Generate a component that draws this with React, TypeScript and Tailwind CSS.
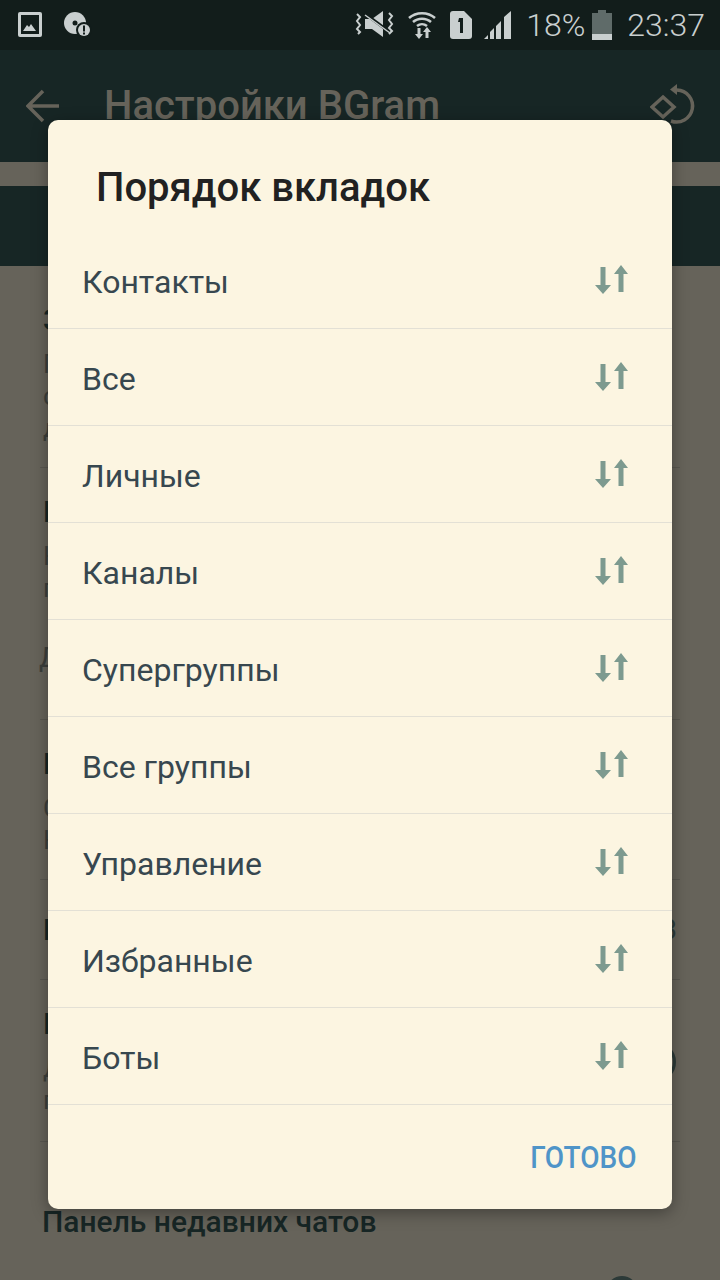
const tabs = [
  "Контакты",
  "Все",
  "Личные",
  "Каналы",
  "Супергруппы",
  "Все группы",
  "Управление",
  "Избранные",
  "Боты",
];

function SortIcon() {
  return (
    <svg width="34" height="32" viewBox="0 0 34 32" fill="#7d9a8f">
      <path d="M5.500 3h5v18h5.500l-8 9-8-9h5.500z" />
      <path d="M23.500 28V10H19l7-9 7 9h-4.500v18z" />
    </svg>
  );
}

function StatusIcons() {
  return (
    <div className="flex items-center">
      <svg width="41" height="32" viewBox="0 0 41 32" fill="none" className="mr-[11px]">
        <path d="M10 10h7l11-8v26l-11-8h-7z" fill="#c9cfcf" />
        <path d="M9 4l27 20" stroke="#121d1b" strokeWidth="3" />
        <path d="M10 6l25 18" stroke="#c9cfcf" strokeWidth="1.500" />
        <path d="M34 4l3 3-3 4 3 4-3 4 3 3-3 3M2 5l3 3-3 4 3 4-3 4 3 3-2 2" stroke="#c9cfcf" strokeWidth="2" />
      </svg>
      <svg width="30" height="30" viewBox="0 0 30 30" fill="none" className="mr-[13px]">
        <path d="M2 8c7-6.500 19-6.500 26 0M6 12c5-4.500 13-4.500 18 0M10 16c3-2.500 7-2.500 10 0" stroke="#c9cfcf" strokeWidth="2.500" />
        <path d="M10.500 18h3v6H16l-4 5-4-5h2.500zM18.500 28v-6H16l4-5 4 5h-2.500v6z" fill="#c9cfcf" />
      </svg>
      <svg width="22" height="28" viewBox="0 0 22 28" className="mr-[12px]">
        <path d="M3 0h11l8 8v17a3 3 0 0 1-3 3H3a3 3 0 0 1-3-3V3a3 3 0 0 1 3-3z" fill="#c9cfcf" />
        <path d="M9 7h4v15h-3V11H8z" fill="#121d1b" />
      </svg>
      <svg width="28" height="28" viewBox="0 0 28 28" fill="#c9cfcf" className="mr-[14px]">
        <path d="M0 28l4-4v4zM6 28v-7l4-4v11zM12 28V15l5-5v18zM20 28V6l7-6v28z" />
      </svg>
      <span className="text-[32px] leading-none font-light text-[#c9cfcf] mr-[7px]">18%</span>
      <svg width="20" height="30" viewBox="0 0 20 30" className="mr-[15px]">
        <path d="M6 0h8v3h6v27H0V3h6z" fill="#5f6b69" />
        <path d="M0 24h20v6H0z" fill="#c9cfcf" />
      </svg>
      <span className="text-[32px] leading-none font-light text-[#c9cfcf]">23:37</span>
    </div>
  );
}

function SettingsBehind() {
  return (
    <div className="flex-1 bg-[#66635a] overflow-hidden text-[#172625]">
      <div className="h-[202px] border-b border-[#595750] mx-[40px] px-[3px] pt-[36px]">
        <div className="text-[30px] font-medium leading-[36px]">З</div>
        <div className="mt-[10px] text-[26px] leading-[32px] text-[#3c3f3b]">
          <div>П</div>
          <div>с</div>
          <div>д</div>
        </div>
      </div>
      <div className="h-[252px] border-b border-[#595750] mx-[40px] px-[3px] pt-[26px]">
        <div className="text-[30px] font-medium leading-[36px]">В</div>
        <div className="mt-[10px] text-[26px] leading-[32px] text-[#3c3f3b]">
          <div>К</div>
          <div>п</div>
        </div>
        <div className="mt-[38px] -ml-[4px] text-[28px] leading-[32px] text-[#3c3f3b]">Д</div>
      </div>
      <div className="h-[160px] border-b border-[#595750] mx-[40px] px-[3px] pt-[26px]">
        <div className="text-[30px] font-medium leading-[36px]">Е</div>
        <div className="mt-[10px] text-[26px] leading-[32px] text-[#3c3f3b]">
          <div>С</div>
          <div>К</div>
        </div>
      </div>
      <div className="h-[100px] border-b border-[#595750] mx-[40px] px-[3px] flex items-center justify-between">
        <span className="text-[30px] font-medium">Б</span>
        <span className="text-[28px] text-[#2c3a38]">3</span>
      </div>
      <div className="h-[162px] border-b border-[#595750] mx-[40px] px-[3px] pt-[26px] relative">
        <div className="text-[30px] font-medium leading-[36px]">Г</div>
        <div className="mt-[10px] text-[26px] leading-[32px] text-[#3c3f3b]">
          <div>Д</div>
          <div>п</div>
        </div>
        <div className="absolute right-[4px] top-[62px] w-[40px] h-[40px] rounded-full border-[3px] border-[#2c3a38]" />
      </div>
      <div className="mx-[42px] mt-[62px] text-[30px] font-medium leading-[36px] text-[#172625]">
        Панель недавних чатов
      </div>
      <div className="flex justify-end pr-[82px] mt-[36px]">
        <div className="w-[32px] h-[32px] rounded-full bg-[#2c3a38]" />
      </div>
    </div>
  );
}

function TabOrderDialog() {
  return (
    <div className="absolute left-[48px] top-[120px] w-[624px] h-[1089px] bg-[#fcf5e1] rounded-[10px] shadow-[0_4px_16px_rgba(0,0,0,0.35)] flex flex-col">
      <div className="h-[112px] pl-[48px] pt-[46px] text-[40px] leading-[44px] font-medium text-[#212121]">
        Порядок вкладок
      </div>
      {tabs.map((tab) => (
        <div
          key={tab}
          className="h-[97px] flex items-center justify-between pl-[34px] pr-[43px] border-b border-[#e3e0d5] shrink-0"
        >
          <span className="text-[32px] leading-none mt-[4px] text-[#37474f]">{tab}</span>
          <span className="flex"><SortIcon /></span>
        </div>
      ))}
      <div className="flex-1 flex justify-end items-center pr-[36px]">
        <span className="text-[32px] font-medium leading-none text-[#4f94c8] scale-x-[0.875] origin-right">ГОТОВО</span>
      </div>
    </div>
  );
}

export default function App() {
  return (
    <div className="relative w-[720px] h-[1280px] overflow-hidden flex flex-col bg-[#66635a] font-['Roboto',sans-serif]">
      {/* status bar */}
      <div className="h-[50px] bg-[#121d1b] flex items-center justify-between pl-[18px] pr-[15px] shrink-0">
        <div className="flex items-center gap-[22px]">
          <svg width="24" height="26" viewBox="0 0 24 26">
            <rect x="0" y="0" width="24" height="25" rx="2" fill="#c9cfcf" />
            <rect x="3" y="3" width="18" height="19" fill="#121d1b" />
            <path d="M5 19l4-6 2 2 2-3 5 7z" fill="#c9cfcf" />
          </svg>
          <svg width="28" height="26" viewBox="0 0 28 26">
            <circle cx="11" cy="11" r="11" fill="#c9cfcf" />
            <circle cx="11" cy="11" r="2.500" fill="#121d1b" />
            <circle cx="20" cy="18" r="8" fill="#121d1b" />
            <circle cx="20" cy="18" r="6" fill="#c9cfcf" />
            <path d="M19 13.500h2v6h-2zM19 20.500h2v2h-2z" fill="#121d1b" />
          </svg>
        </div>
        <StatusIcons />
      </div>

      {/* app bar */}
      <div className="h-[112px] bg-[#172625] flex items-center pl-[26px] pr-[24px] shrink-0">
        <svg width="34" height="34" viewBox="0 0 34 34" fill="none" stroke="#66635a" strokeWidth="3.500">
          <path d="M33 17H3M17 2L2 17l15 15" />
        </svg>
        <div className="ml-[44px] flex-1 text-[40px] font-medium text-[#66635a] leading-none">Настройки BGram</div>
        <svg width="46" height="44" viewBox="0 0 46 44" fill="none" stroke="#66635a" strokeWidth="3.500">
          <path d="M27 6a16 16 0 1 1-6 31" />
          <path d="M27 0v11l-7-5.500z" fill="#66635a" stroke="none" />
          <path d="M13 13l11 10-11 10L2 23z" />
        </svg>
      </div>

      <div className="h-[24px] bg-[#66635a] shrink-0" />
      <div className="h-[80px] bg-[#172625] shrink-0" />

      <SettingsBehind />
      <TabOrderDialog />
    </div>
  );
}
